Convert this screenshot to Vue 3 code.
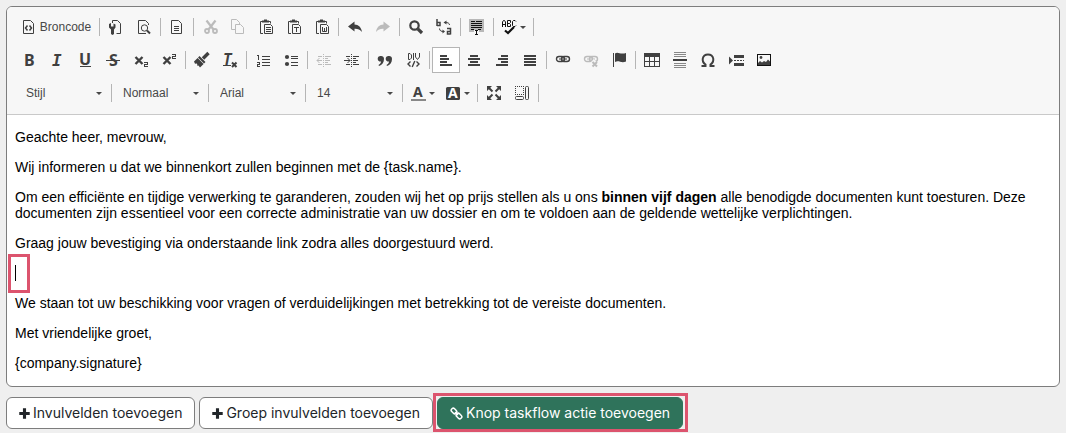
<script setup>
const page = '<path d="M2.5 1.5H9.5L12.5 4.5V14.5H2.5Z"/>'
const clipboard =
  '<path d="M5 14.5H2.5V2.5H4.5M10.5 2.5H12.5V4.5"/><path class="f" d="M4 3.5V1.5H6V0.5H9V1.5H11V3.5Z"/><path d="M6.5 5.5H12.5L14.5 7.5V14.5H6.5Z"/>'
const chain =
  '<rect x="1.5" y="4.5" width="8" height="5" rx="2.5" stroke-width="1.4"/><rect x="6.5" y="4.5" width="8" height="5" rx="2.5" stroke-width="1.4"/><path d="M4 7H12"/>'
const stripes =
  '<path class="c" d="M9 4.5H15M9 6.5H12M9 8.5H14M9 10.5H12M2 12.5H6M2 4.5H6M9 12.5H15"/><path class="c" stroke-dasharray="1 1" d="M7.5 2V15"/>'
const undo = '<path class="f" d="M1 7.5L7.5 2.5V5.5C11.5 5.5 14.5 8.5 15 13C13 10.5 10.5 9.5 7.5 9.7V12.5Z"/>'

const icons = {
  source: page + '<path stroke-width="1.5" d="M6.5 6.5L4.5 9L6.5 11.5M8.5 6.5L10.5 9L8.5 11.5"/>',
  template:
    '<path d="M4.5 4V1.5H9.5L12.5 4.5V14.5H8.5"/><path class="f" d="M1 5L3 4V7.5H5.5V4.5L7.5 5.5V8.5L6 10.5V15L4.5 16L3 15V10.5L1 8.5Z"/>',
  preview:
    '<path d="M10 14.5H2.5V1.5H9.5L12.5 4.5V6"/><circle cx="8.5" cy="9" r="3.2"/><path stroke-width="2" d="M11 11.5L14 14.5"/>',
  document: page + '<path class="c" d="M5 7.5H10M5 9.5H10M5 11.5H10"/>',
  cut: '<path stroke-width="2.2" d="M4.5 1.5L11.5 10.5M13.5 1.5L6.5 10.5"/><circle cx="5" cy="12" r="2" stroke-width="1.8"/><circle cx="13" cy="12" r="2" stroke-width="1.8"/>',
  copy: '<path d="M5 10.5H1.5V0.5H6.5L9.5 3.5V5"/><path d="M5.5 5.5H10.5L13.5 8.5V14.5H5.5Z"/>',
  paste: clipboard + '<path class="c" d="M8 8.5H13M8 10.5H13M8 12.5H13"/>',
  pasteText: clipboard + '<path class="c" d="M8 8.5H13M10.5 8V13"/>',
  pasteWord: clipboard + '<path d="M8.5 8V12.5H12.5V8M10.5 9V12"/>',
  undo,
  redo: `<g transform="matrix(-1 0 0 1 16 0)">${undo}</g>`,
  find: '<circle cx="6.5" cy="6.5" r="4.2" stroke-width="2.2"/><path stroke-width="3.2" d="M9.8 9.8L14 14"/>',
  replace:
    '<path stroke-width="1.5" d="M1 0V7M1 3.5H4V6.5H1M11 9.5H14.5V15.5M14.5 12.5H11.5V15H14.5"/><path d="M13.5 6C13.5 4 11.5 3.5 9.5 3.5M3.5 9.5C3.5 12 5.5 12.5 7.5 12.5"/><path class="f" d="M7.5 3.5L10.5 1.5V5.5ZM9 12.5L6.5 10.5V14.5Z"/>',
  selectAll:
    '<path fill="#b8b8b8" stroke="none" d="M0 0H15V13H0Z"/><path class="c k" d="M2 2.5H6M7 2.5H13M2 4.5H13M2 6.5H13M2 8.5H13M2 10.5H5M9 10.5H12"/><path fill="#f7f7f7" stroke="none" d="M5 11H10V16H5Z"/><path class="c k" d="M6 11.5H9M6 15.5H9M7.5 11V16"/>',
  spell:
    '<path class="k" d="M1.5 8V3L2.5 1.5H3.5L4.5 3V8M1.5 5.5H4.5M6.5 1.5V7.5H9.5V5.5L8.5 4.5H6.5M6.5 1.5H9.5V3.5L8.5 4.5M15 2.5L14 1.5H12.5L11.5 2.5V6.5L12.5 7.5H14L15 6.5"/><path class="k" stroke-width="2.2" d="M4 11.5L7 14L13 8"/>',
  bold: '<text x="3" y="14" font-size="16">B</text>',
  italic: '<text x="3" y="14" class="mono" font-size="16" font-style="italic">I</text>',
  underline: '<text x="2" y="13" font-size="16">U</text><path class="c" d="M3 14.5H14"/>',
  strike: '<text x="4" y="14" font-size="16">S</text><path class="c" d="M1 8.5H15"/>',
  sub: '<path stroke-width="2.4" d="M2.5 5L9.5 12M9.5 5L2.5 12"/><path class="c" d="M11 10.5H14.5V12.5H11.5V14.5H15"/>',
  sup: '<path stroke-width="2.4" d="M2.5 5L9.5 12M9.5 5L2.5 12"/><path class="c" d="M11 2.5H14.5V4.5H11.5V6.5H15"/>',
  brush:
    '<path stroke-width="3.4" d="M9 6.5L14.5 1"/><path class="f" d="M5.5 4L11.5 10L10 11.5L4 5.5ZM3.6 6L9.6 12L6 15.5L4.5 13.5L3.5 14L3 11.5L1 11.8L0 9.5Z"/>',
  clear:
    '<text x="1" y="13" class="mono" font-size="15" font-style="italic">T</text><path class="c" d="M1 13.5H9"/><path stroke-width="2" d="M10 10.5L14.5 15M14.5 10.5L10 15"/>',
  numbered:
    '<path class="c" d="M2 3.5H3.5V7.5M2 10.5H4.5V12.5H2.5V14.5H5M7 4.5H14.5M7 7.5H14.5M7 10.5H14.5M7 13.5H14.5"/>',
  bulleted:
    '<circle class="f" cx="4" cy="5" r="2.1"/><circle class="f" cx="4" cy="12" r="2.1"/><path class="c" d="M8 4.5H15M8 6.5H15M8 10.5H15M8 13.5H15"/>',
  outdent: stripes + '<path d="M1 8.5H6M3.5 6L1 8.5L3.5 11"/>',
  indent: stripes + '<path d="M0 8.5H6M3.5 6L6 8.5L3.5 11"/>',
  quote:
    '<path class="f" d="M4 4A2.8 2.8 0 0 1 7 7C7 10.5 5 13 2 14L1.5 13C3 12 4 11 4 9.5A2.8 2.8 0 1 1 4 4ZM12 4A2.8 2.8 0 0 1 15 7C15 10.5 13 13 10 14L9.5 13C11 12 12 11 12 9.5A2.8 2.8 0 1 1 12 4Z"/>',
  div: '<path d="M3.5 1.5V7.5H5L6.5 6V3L5 1.5ZM8.5 1V8M10.5 1V5L12.5 7.5L14.5 5V1"/><path stroke-width="1.4" d="M5.5 9.5L3 12L5.5 14.5M11.5 9.5L14 12L11.5 14.5M9.8 9L7.2 15"/>',
  left: '<path class="c w" d="M2 4H9M2 7H11M2 10H9M2 13H14"/>',
  center: '<path class="c w" d="M4 4H12M2 7H14M4 10H12M2 13H14"/>',
  right: '<path class="c w" d="M7 4H14M4 7H14M7 10H14M2 13H14"/>',
  justify: '<path class="c w" d="M2 4H14M2 7H14M2 10H14M2 13H14"/>',
  link: chain,
  unlink: chain + '<path stroke="#f7f7f7" stroke-width="5" d="M9 9L14 14"/><path stroke-width="2" d="M9.5 10L14 14.5M14 10L9.5 14.5"/>',
  flag: '<path class="c" d="M2.5 1V15"/><path class="f" d="M4 1.5C7 -1 9 3 15 1V9.5C10 11.5 8 8 4 10Z"/>',
  table:
    '<path class="f" d="M0 1H16V5H0Z"/><path class="c" d="M0.5 4V14.5H15.5V4M5.5 5V14M10.5 5V14M0 9.5H16"/>',
  rule: '<path class="c" stroke="#888" d="M2 0.5H14M2 2.5H14M2 4.5H14M2 11.5H14M2 13.5H14M2 15.5H14"/><path class="c w" d="M1 8H15"/>',
  omega: '<path stroke-width="2" d="M1.5 14H5.5V12.5C1 9.5 2 2.5 8 2.5S15 9.5 10.5 12.5V14H14.5"/>',
  pageBreak:
    '<path class="f" d="M1 4.5L5 8.5L1 12.5ZM6 3H16V6H6ZM6 11H16V14H6Z"/><path class="c" stroke-dasharray="2 1" d="M6 8.5H16"/>',
  image:
    '<rect class="k" x="1.5" y="2.5" width="13" height="11"/><circle class="f" cx="5" cy="5.5" r="1.4"/><path class="f" d="M2 13V11L4 9L6 10.5L8 9L10 10L12 7.5L14 9.5V13Z"/>',
  textColor: '<text x="3" y="12" font-size="14">A</text><path fill="#888" stroke="none" d="M1 14H16V16H1Z"/>',
  bgColor: '<rect class="f" x="1" y="2" width="14" height="13" rx="1.5"/><text x="3" y="13" font-size="14" class="light">A</text>',
  maximize:
    '<path class="f" d="M1 1H6L1 6ZM15 1V6L10 1ZM1 15V10L6 15ZM15 15H10L15 10Z"/><path stroke-width="2" d="M3 3L6.5 6.5M13 3L9.5 6.5M3 13L6.5 9.5M13 13L9.5 9.5"/>',
  blocks:
    '<path class="c" stroke-dasharray="1 1" d="M1 1.5H10M1 9.5H10M1.5 1V10M9.5 1V10"/><rect x="1.5" y="11.5" width="8" height="3" rx="1"/><rect x="11.5" y="1.5" width="3" height="13" rx="1"/>'
}

const b = (id, label, more = {}) => ({ id, label, ...more })
const off = { disabled: true }

const rows = [
  [
    [b('source', 'Broncode', { text: true })],
    [b('template', 'Sjablonen'), b('preview', 'Voorbeeld')],
    [b('document', 'Nieuwe pagina')],
    [b('cut', 'Knippen', off), b('copy', 'Kopiëren', off), b('paste', 'Plakken'), b('pasteText', 'Plakken als platte tekst'), b('pasteWord', 'Plakken vanuit Word')],
    [b('undo', 'Ongedaan maken'), b('redo', 'Opnieuw uitvoeren', off)],
    [b('find', 'Zoeken'), b('replace', 'Vervangen')],
    [b('selectAll', 'Alles selecteren')],
    [b('spell', 'Spellingscontrole', { menu: true })]
  ],
  [
    [b('bold', 'Vet'), b('italic', 'Cursief'), b('underline', 'Onderstrepen'), b('strike', 'Doorhalen'), b('sub', 'Subscript'), b('sup', 'Superscript')],
    [b('brush', 'Opmaak kopiëren'), b('clear', 'Opmaak verwijderen')],
    [b('numbered', 'Genummerde lijst'), b('bulleted', 'Opsomming')],
    [b('outdent', 'Inspringing verkleinen', off), b('indent', 'Inspringing vergroten')],
    [b('quote', 'Citaatblok'), b('div', 'Div aanmaken')],
    [b('left', 'Links uitlijnen', { active: true }), b('center', 'Centreren'), b('right', 'Rechts uitlijnen'), b('justify', 'Uitvullen')],
    [b('link', 'Link invoegen'), b('unlink', 'Link verwijderen', off), b('flag', 'Anker')],
    [b('table', 'Tabel'), b('rule', 'Horizontale lijn'), b('omega', 'Speciaal teken'), b('pageBreak', 'Pagina-einde'), b('image', 'Afbeelding')]
  ],
  [
    [b('style', 'Stijl', { combo: 'Stijl' })],
    [b('format', 'Opmaak', { combo: 'Normaal' })],
    [b('font', 'Lettertype', { combo: 'Arial' })],
    [b('size', 'Lettergrootte', { combo: '14' })],
    [b('textColor', 'Tekstkleur', { menu: true }), b('bgColor', 'Achtergrondkleur', { menu: true })],
    [b('maximize', 'Maximaliseren'), b('blocks', 'Toon blokken')]
  ]
]

const isLast = (r, g) => r === 1 && g === rows[1].length - 1
</script>

<template>
  <main class="screen">
    <section class="editor">
      <div class="toolbar" role="toolbar" aria-label="Tekstopmaak">
        <div v-for="(row, r) in rows" :key="r" class="row" :class="{ combos: r === 2 }">
          <div v-for="(group, g) in row" :key="g" class="group" :class="{ last: isLast(r, g) }">
            <template v-for="item in group" :key="item.id">
              <span v-if="item.combo" class="combo">
                <select :aria-label="item.label">
                  <option>{{ item.combo }}</option>
                </select>
                <i class="arrow"></i>
              </span>
              <button
                v-else
                type="button"
                class="tool"
                :class="{ active: item.active, menu: item.menu, labelled: item.text }"
                :disabled="item.disabled"
                :aria-label="item.label"
              >
                <svg class="icon" viewBox="0 0 16 16" aria-hidden="true" v-html="icons[item.id]"></svg>
                <span v-if="item.text">{{ item.label }}</span>
                <i v-if="item.menu" class="arrow"></i>
              </button>
            </template>
          </div>
        </div>
      </div>
      <div class="content" contenteditable="true" spellcheck="false" role="textbox" aria-multiline="true" aria-label="Bericht">
        <p>Geachte heer, mevrouw,</p>
        <p>Wij informeren u dat we binnenkort zullen beginnen met de {task.name}.</p>
        <p>Om een efficiënte en tijdige verwerking te garanderen, zouden wij het op prijs stellen als u ons <strong>binnen vijf dagen</strong> alle benodigde documenten kunt toesturen. Deze documenten zijn essentieel voor een correcte administratie van uw dossier en om te voldoen aan de geldende wettelijke verplichtingen.</p>
        <p>Graag jouw bevestiging via onderstaande link zodra alles doorgestuurd werd.</p>
        <p class="cursor-line"><span class="caret"></span></p>
        <p>We staan tot uw beschikking voor vragen of verduidelijkingen met betrekking tot de vereiste documenten.</p>
        <p>Met vriendelijke groet,</p>
        <p>{company.signature}</p>
      </div>
    </section>
    <div class="actions">
      <button type="button" class="action">
        <svg class="glyph" viewBox="0 0 12 12" aria-hidden="true"><path d="M4.3 0.3h3.4v4h4v3.4h-4v4H4.3v-4h-4V4.3h4z" /></svg>
        Invulvelden toevoegen
      </button>
      <button type="button" class="action">
        <svg class="glyph" viewBox="0 0 12 12" aria-hidden="true"><path d="M4.3 0.3h3.4v4h4v3.4h-4v4H4.3v-4h-4V4.3h4z" /></svg>
        Groep invulvelden toevoegen
      </button>
      <button type="button" class="action primary">
        <svg class="glyph chain" viewBox="0 0 13 13" aria-hidden="true">
          <rect x="1" y="2" width="6" height="4" rx="1.8" transform="rotate(45 4 4)" />
          <rect x="6" y="7" width="6" height="4" rx="1.8" transform="rotate(45 9 9)" />
          <path d="M5 5L8 8" />
        </svg>
        Knop taskflow actie toevoegen
      </button>
    </div>
  </main>
</template>

<style>
html,
body {
  background: #efefef;
}
body {
  margin: 0;
}
</style>

<style scoped>
.screen {
  padding: 6px;
  color: #212529;
}
.editor {
  border: 1px solid #7d7d7d;
  border-radius: 6px;
  background: #fff;
  overflow: hidden;
}
.toolbar {
  display: flex;
  flex-direction: column;
  gap: 7px;
  padding: 7px 8px 8px;
  border-bottom: 1px solid #c9c9c9;
  background: #f7f7f7;
}
.row {
  display: flex;
  height: 26px;
}
.combos {
  padding-left: 2px;
}
.group {
  display: flex;
}
.group::after {
  content: '';
  width: 1px;
  height: 18px;
  margin: 4px 2px;
  background: #b5b5b5;
}
.group.last::after {
  display: none;
}
.tool {
  display: flex;
  align-items: center;
  justify-content: center;
  box-sizing: border-box;
  width: 28px;
  height: 26px;
  padding: 0;
  border: 0;
  background: none;
  color: #484848;
  font: 12px/16px 'Liberation Sans', Arial, sans-serif;
}
.tool.labelled {
  width: 82px;
  gap: 3px;
}
.tool.menu {
  width: 35px;
  gap: 3px;
}
.tool.active {
  border: 1px solid #b5b5b5;
  background: #fff;
}
.tool:disabled {
  opacity: 0.32;
}
.icon {
  flex: none;
  width: 16px;
  height: 16px;
  overflow: visible;
  fill: none;
  stroke: #404040;
}
.icon :deep(.f) {
  fill: #404040;
  stroke: none;
}
.icon :deep(.c) {
  shape-rendering: crispEdges;
}
.icon :deep(.k) {
  stroke: #111;
}
.icon :deep(.w) {
  stroke-width: 2;
}
.icon :deep(text) {
  fill: #404040;
  stroke: none;
  font-family: 'Noto Sans', sans-serif;
  font-weight: 700;
}
.icon :deep(.mono) {
  font-family: 'DejaVu Sans Mono', monospace;
}
.icon :deep(.light) {
  fill: #fff;
}
.arrow {
  width: 0;
  height: 0;
  border: 3px solid transparent;
  border-top-color: #484848;
  border-bottom: 0;
}
.combo {
  position: relative;
  display: flex;
  align-items: center;
  width: 92px;
}
.combo select {
  width: 100%;
  height: 26px;
  padding: 0 20px 0 9px;
  border: 0;
  background: none;
  appearance: none;
  color: #484848;
  font: 12px/16px 'Liberation Sans', Arial, sans-serif;
}
.combo .arrow {
  position: absolute;
  right: 7px;
  pointer-events: none;
}
.content {
  padding: 14px 8px 15px;
  outline: 0;
  color: #000;
  font: 14px/16px 'Liberation Sans', Arial, sans-serif;
}
.content p {
  margin: 0 0 14px;
}
.content p:last-child {
  margin-bottom: 0;
}
.cursor-line {
  position: relative;
  height: 16px;
}
.cursor-line::after {
  content: '';
  position: absolute;
  box-sizing: border-box;
  top: -11px;
  left: -7px;
  width: 22px;
  height: 39px;
  border: 3px solid #dc546e;
}
.caret {
  display: block;
  width: 1px;
  height: 16px;
  background: #000;
}
.actions {
  display: flex;
  gap: 4px;
  margin-top: 10px;
}
.action {
  position: relative;
  display: flex;
  align-items: center;
  gap: 3px;
  height: 32px;
  padding: 0 12px;
  border: 1px solid #7d7d7d;
  border-radius: 6px;
  background: #fff;
  color: #212529;
  font: 14px/20px Inter, sans-serif;
  white-space: nowrap;
}
.glyph {
  width: 11px;
  height: 11px;
  fill: currentColor;
}
.chain {
  width: 13px;
  height: 13px;
  fill: none;
  stroke: currentColor;
  stroke-width: 1.5;
}
.primary {
  border-color: #2f735b;
  background: #2f735b;
  color: #fff;
}
.primary::after {
  content: '';
  position: absolute;
  inset: -5px -6px -4px -5px;
  border: 3px solid #dc546e;
}
</style>
